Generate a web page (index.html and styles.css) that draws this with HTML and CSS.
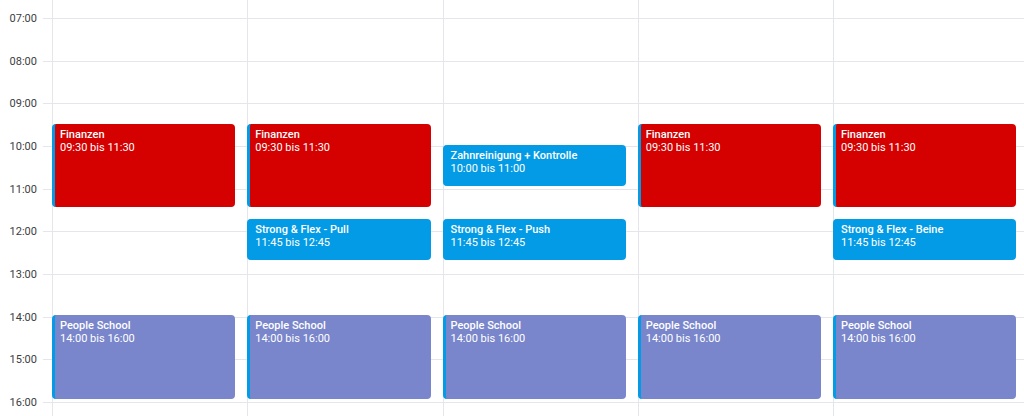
FILE: index.html
```html
<!DOCTYPE html>
<html lang="de">
<head>
<meta charset="utf-8">
<title>Kalender</title>
<link rel="stylesheet" href="styles.css">
</head>
<body>
<div class="calendar">
  <div class="hours">
    <div class="hour"><span class="hour-label">07:00</span><span class="hour-line"></span></div>
    <div class="hour"><span class="hour-label">08:00</span><span class="hour-line"></span></div>
    <div class="hour"><span class="hour-label">09:00</span><span class="hour-line"></span></div>
    <div class="hour"><span class="hour-label">10:00</span><span class="hour-line"></span></div>
    <div class="hour"><span class="hour-label">11:00</span><span class="hour-line"></span></div>
    <div class="hour"><span class="hour-label">12:00</span><span class="hour-line"></span></div>
    <div class="hour"><span class="hour-label">13:00</span><span class="hour-line"></span></div>
    <div class="hour"><span class="hour-label">14:00</span><span class="hour-line"></span></div>
    <div class="hour"><span class="hour-label">15:00</span><span class="hour-line"></span></div>
    <div class="hour"><span class="hour-label">16:00</span><span class="hour-line"></span></div>
  </div>
  <div class="days">
    <div class="day">
      <div class="event red" style="grid-row: 12 / 20"><div class="ev-title">Finanzen</div><div class="ev-time">09:30 bis 11:30</div></div>
      <div class="event lavender" style="grid-row: 30 / 38"><div class="ev-title">People School</div><div class="ev-time">14:00 bis 16:00</div></div>
    </div>
    <div class="day">
      <div class="event red" style="grid-row: 12 / 20"><div class="ev-title">Finanzen</div><div class="ev-time">09:30 bis 11:30</div></div>
      <div class="event blue" style="grid-row: 21 / 25"><div class="ev-title">Strong &amp; Flex - Pull</div><div class="ev-time">11:45 bis 12:45</div></div>
      <div class="event lavender" style="grid-row: 30 / 38"><div class="ev-title">People School</div><div class="ev-time">14:00 bis 16:00</div></div>
    </div>
    <div class="day">
      <div class="event blue" style="grid-row: 14 / 18"><div class="ev-title">Zahnreinigung + Kontrolle</div><div class="ev-time">10:00 bis 11:00</div></div>
      <div class="event blue" style="grid-row: 21 / 25"><div class="ev-title">Strong &amp; Flex - Push</div><div class="ev-time">11:45 bis 12:45</div></div>
      <div class="event lavender" style="grid-row: 30 / 38"><div class="ev-title">People School</div><div class="ev-time">14:00 bis 16:00</div></div>
    </div>
    <div class="day">
      <div class="event red" style="grid-row: 12 / 20"><div class="ev-title">Finanzen</div><div class="ev-time">09:30 bis 11:30</div></div>
      <div class="event lavender" style="grid-row: 30 / 38"><div class="ev-title">People School</div><div class="ev-time">14:00 bis 16:00</div></div>
    </div>
    <div class="day">
      <div class="event red" style="grid-row: 12 / 20"><div class="ev-title">Finanzen</div><div class="ev-time">09:30 bis 11:30</div></div>
      <div class="event blue" style="grid-row: 21 / 25"><div class="ev-title">Strong &amp; Flex - Beine</div><div class="ev-time">11:45 bis 12:45</div></div>
      <div class="event lavender" style="grid-row: 30 / 38"><div class="ev-title">People School</div><div class="ev-time">14:00 bis 16:00</div></div>
    </div>
  </div>
</div>
</body>
</html>
```
FILE: styles.css
```css
html, body {
  margin: 0;
  padding: 0;
  height: 416px;
  overflow: hidden;
  background: #ffffff;
}

body {
  font-family: Roboto, "Liberation Sans", Arial, sans-serif;
}

.calendar {
  display: grid;
  grid-template-columns: 52px repeat(5, 195.25px);
  grid-template-rows: 416px;
  width: 1024px;
  height: 416px;
  overflow: hidden;
}

.hours {
  grid-area: 1 / 1 / 2 / 7;
  display: flex;
  flex-direction: column;
  padding-top: 18px;
  overflow: hidden;
}

.hour {
  display: flex;
  height: calc(128px / 3);
  flex: none;
}

.hour-label {
  width: 37px;
  margin-top: -6px;
  height: 13px;
  line-height: 13px;
  font-size: 11px;
  color: #3c4043;
  text-align: right;
}

.hour-line {
  flex: 1;
  margin-left: 6px;
  border-top: 1px solid #e4e6ec;
}

.days {
  grid-area: 1 / 2 / 2 / 7;
  display: flex;
  overflow: hidden;
}

.day {
  flex: none;
  width: 195.25px;
  box-sizing: border-box;
  border-left: 1px solid #e4e6ec;
  display: grid;
  grid-template-columns: 1fr;
  grid-template-rows: 18px repeat(40, calc(128px / 12));
}

.event {
  grid-column: 1;
  margin: -1px 12px 3px -1px;
  border-left: 3px solid #039be5;
  border-radius: 4px;
  padding: 5px 5px 0 5px;
  color: #ffffff;
  font-size: 11px;
  line-height: 12px;
  overflow: hidden;
}

.red { background: #d50000; }
.blue { background: #039be5; }
.lavender { background: #7986cb; }

.ev-title {
  font-weight: 500;
  white-space: nowrap;
}

.ev-time {
  padding-top: 1px;
  white-space: nowrap;
}
```
